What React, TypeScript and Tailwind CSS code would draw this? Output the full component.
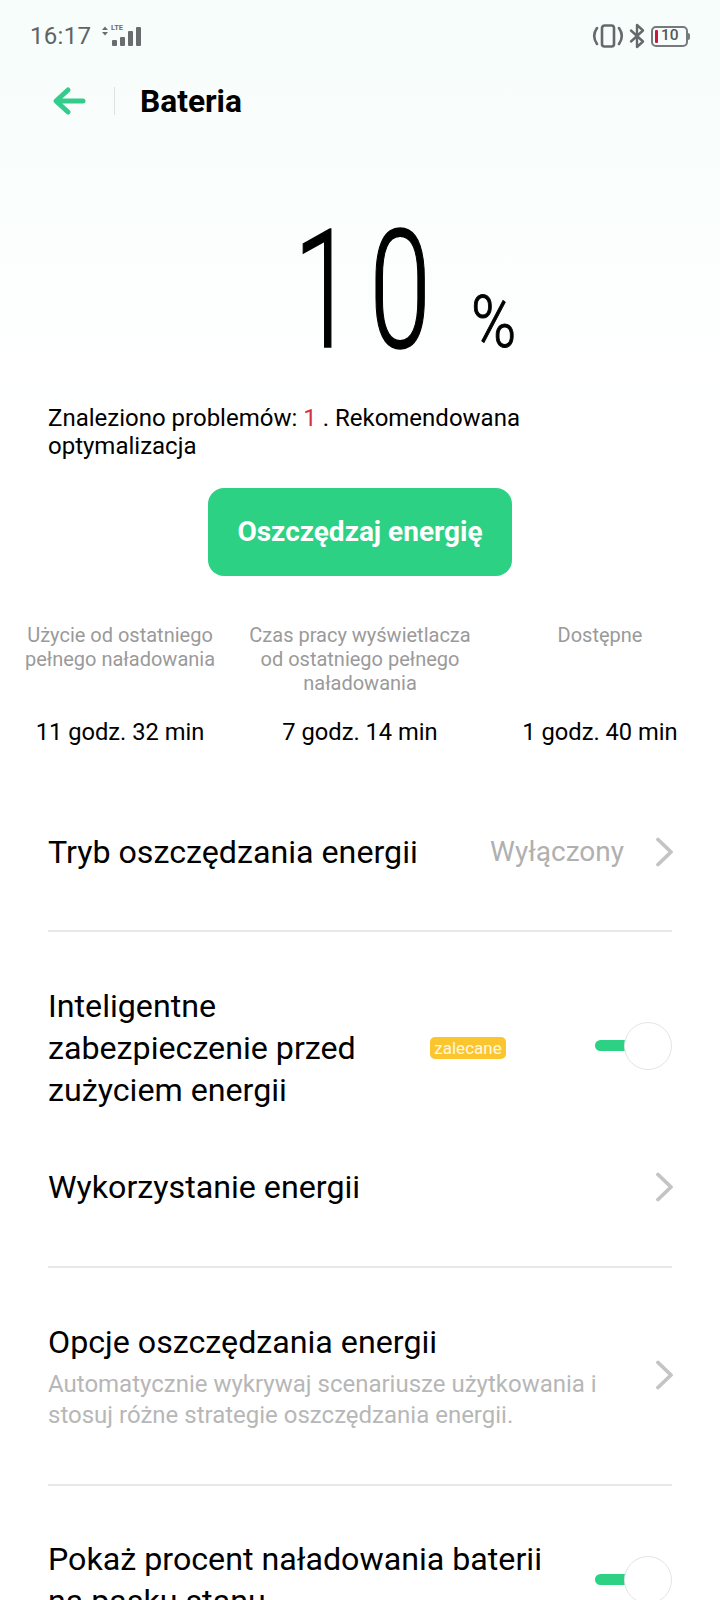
import React from "react";

const Chevron = () => (
  <svg width="20" height="30" viewBox="0 0 20 30" fill="none" className="shrink-0">
    <path d="M3 2.5 L16 15 L3 27.5" stroke="#c4c4c4" strokeWidth="3.8" strokeLinecap="round" strokeLinejoin="round" />
  </svg>
);

const Toggle = () => (
  <div className="relative w-[77px] h-[48px] shrink-0">
    <div className="absolute left-0 top-[18px] w-[40px] h-[11px] rounded-full bg-[#2dd184]" />
    <div className="absolute right-0 top-0 w-[48px] h-[48px] rounded-full bg-white border border-[#e4e4e4]" />
  </div>
);

export default function App() {
  return (
    <div className="w-[720px] h-[1600px] overflow-hidden bg-white text-black font-['Roboto',sans-serif]">
      <div className="bg-gradient-to-b from-[#f6fdfb] to-white">
        <div className="h-[72px] px-[30px] flex items-center justify-between">
          <div className="flex items-center gap-[10px]">
            <span className="text-[24px] tracking-[0.3px] text-[#5f6366]">16:17</span>
            <svg width="50" height="26" viewBox="0 0 50 26" className="-mt-[3px]">
              <path d="M1 8 L4 4.5 L7 8 Z M1 10 L7 10 L4 13.5 Z" fill="#6a6d70" />
              <text x="10" y="7.5" fontSize="7.5" fontWeight="700" fontFamily="Roboto" fill="#6a6d70">LTE</text>
              <rect x="11" y="18" width="5" height="6" rx="1" fill="#6a6d70" />
              <rect x="19" y="15" width="5" height="9" rx="1" fill="#6a6d70" />
              <rect x="27" y="9" width="5" height="15" rx="1" fill="#6a6d70" />
              <rect x="35" y="5" width="5" height="19" rx="1" fill="#6a6d70" />
            </svg>
          </div>
          <div className="flex items-center gap-[5px] pr-[2px]">
            <svg width="32" height="26" viewBox="0 0 32 26" fill="none" stroke="#66696c">
              <rect x="10" y="2.5" width="12" height="21" rx="2.5" strokeWidth="2.6" />
              <path d="M5 5 C1.5 10 1.5 16 5 21 M27 5 C30.5 10 30.5 16 27 21" strokeWidth="2.6" strokeLinecap="round" />
            </svg>
            <svg width="16" height="26" viewBox="0 0 16 26" fill="none" stroke="#66696c" strokeWidth="2.4" strokeLinejoin="round" strokeLinecap="round">
              <path d="M2 7.5 L14 18.5 L8 24 L8 2 L14 7.5 L2 18.5" />
            </svg>
            <div className="relative ml-[1px] w-[37px] h-[21px] rounded-[5px] border-[2px] border-[#77797c] flex items-center pl-[2px]">
              <div className="w-[3px] h-[13px] rounded-[1px] bg-[#c8193c]" />
              <span className="ml-[3px] text-[15.5px] font-medium leading-none text-[#55585b]">10</span>
              <div className="absolute -right-[4px] top-[5px] w-[2px] h-[7px] rounded-r-full bg-[#77797c]" />
            </div>
          </div>
        </div>

        <div className="h-[58px] flex items-center">
          <svg width="36" height="30" viewBox="0 0 36 30" fill="none" className="ml-[52px]">
            <path d="M16 4 L4 15 L16 26 M5 15 L31 15" stroke="#33cc8c" strokeWidth="5" strokeLinecap="round" strokeLinejoin="round" />
          </svg>
          <div className="ml-[26px] w-px h-[28px] bg-[#dfe2e2]" />
          <div className="ml-[25px] mt-[1px] text-[31.7px] font-bold leading-none">Bateria</div>
        </div>

        <div className="pt-[78px] pb-[31px] flex items-baseline">
          <span className="ml-[256px] text-[165px] leading-[165px] font-light [-webkit-text-stroke:1.5px_black] inline-block scale-x-[0.67] tracking-[22px]">10</span>
          <span className="-ml-[16px] text-[72px] leading-[72px] font-light [-webkit-text-stroke:1px_black] inline-block scale-x-[0.85]">%</span>
        </div>
      </div>

      <div className="px-[48px] text-[24px] leading-[28px]">
        Znaleziono problemów: <span className="text-[#d4343f]">1</span> . Rekomendowana<br />optymalizacja
      </div>

      <div className="flex justify-center mt-[28px]">
        <div className="w-[304px] h-[88px] rounded-[16px] bg-[#2dd184] flex items-center justify-center text-white text-[28px] font-bold">
          Oszczędzaj energię
        </div>
      </div>

      <div className="mt-[47px] grid grid-cols-3 text-center">
        {[
          ["Użycie od ostatniego pełnego naładowania", "11 godz. 32 min"],
          ["Czas pracy wyświetlacza od ostatniego pełnego naładowania", "7 godz. 14 min"],
          ["Dostępne", "1 godz. 40 min"],
        ].map(([a, b]) => (
          <div key={b} className="flex flex-col items-center">
            <div className="h-[88px] w-[228px] text-[20px] leading-[24px] text-[#9a9a9a]">{a}</div>
            <div className="mt-[7px] text-[23.7px] leading-[28px] whitespace-nowrap">{b}</div>
          </div>
        ))}
      </div>

      <div className="mx-[48px] mt-[62px] text-[32.2px]">
        <div className="h-[88px] flex items-center justify-between">
          <span>Tryb oszczędzania energii</span>
          <div className="flex items-center gap-[31px] -mr-[3px]">
            <span className="text-[#b0b0b0] text-[28px]">Wyłączony</span>
            <Chevron />
          </div>
        </div>
        <div className="h-[2px] bg-[#e8e8e8] mt-[34px]" />

        <div className="mt-[53px] flex items-center">
          <div className="w-[340px] leading-[42px]">Inteligentne zabezpieczenie przed zużyciem energii</div>
          <div className="ml-[42px] w-[76px] h-[22px] rounded-[5px] bg-[#fbc52d] text-[#fff8e0] text-[17px] leading-[22px] text-center">zalecane</div>
          <div className="ml-auto -mt-[4px]"><Toggle /></div>
        </div>

        <div className="mt-[55px] h-[42px] flex items-center justify-between">
          <span>Wykorzystanie energii</span>
          <div className="-mr-[3px] flex"><Chevron /></div>
        </div>
        <div className="h-[2px] bg-[#e8e8e8] mt-[58px]" />

        <div className="mt-[55px] flex items-center justify-between">
          <div>
            <div className="leading-[38px]">Opcje oszczędzania energii</div>
            <div className="mt-[8px] text-[24px] leading-[31px] text-[#b7b7b7] whitespace-nowrap">
              Automatycznie wykrywaj scenariusze użytkowania i<br />stosuj różne strategie oszczędzania energii.
            </div>
          </div>
          <div className="-mr-[3px] -mt-[4px] flex"><Chevron /></div>
        </div>
        <div className="h-[2px] bg-[#e8e8e8] mt-[53px]" />

        <div className="mt-[52px] flex items-start justify-between">
          <div className="w-[520px] leading-[42px]">Pokaż procent naładowania baterii na pasku stanu</div>
          <div className="mt-[18px]"><Toggle /></div>
        </div>
      </div>
    </div>
  );
}
